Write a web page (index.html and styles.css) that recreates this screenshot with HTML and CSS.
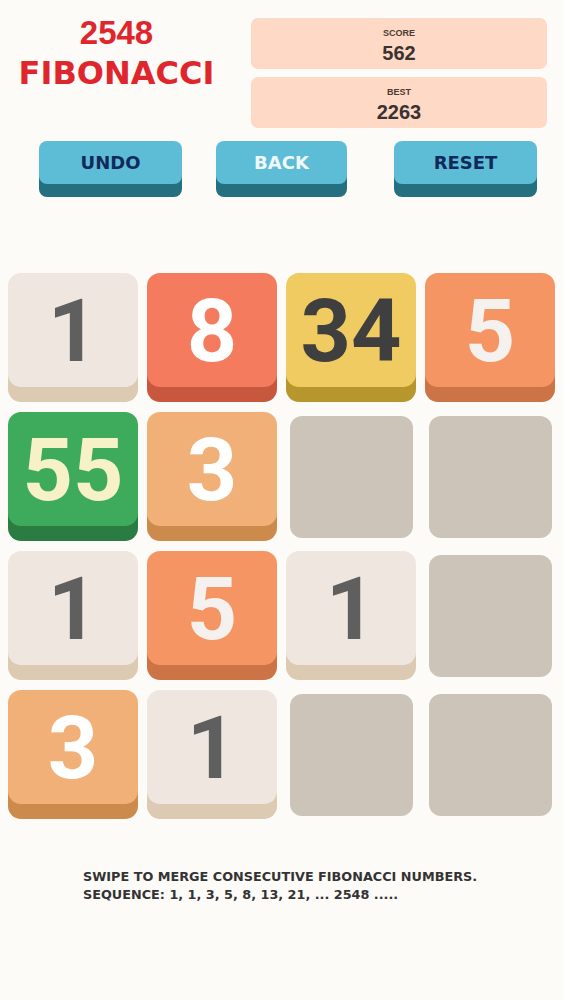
FILE: index.html
```html
<!DOCTYPE html>
<html lang="en">
<head>
<meta charset="utf-8">
<title>2548 Fibonacci</title>
<link rel="stylesheet" href="styles.css">
</head>
<body>
<div class="page">
  <header class="top">
    <h1 class="title"><span class="title-line title-num">2548</span><span class="title-line">FIBONACCI</span></h1>
    <div class="scores">
      <div class="score-box"><div class="score-label">SCORE</div><div class="score-value">562</div></div>
      <div class="score-box"><div class="score-label">BEST</div><div class="score-value">2263</div></div>
    </div>
  </header>
  <nav class="controls">
    <button class="btn btn-undo">UNDO</button>
    <button class="btn btn-back">BACK</button>
    <button class="btn btn-reset">RESET</button>
  </nav>
  <main class="board">
    <div class="cell"><div class="tile t1">1</div></div>
    <div class="cell"><div class="tile t8">8</div></div>
    <div class="cell"><div class="tile t34">34</div></div>
    <div class="cell"><div class="tile t5">5</div></div>

    <div class="cell"><div class="tile t55">55</div></div>
    <div class="cell"><div class="tile t3">3</div></div>
    <div class="cell"><div class="empty"></div></div>
    <div class="cell"><div class="empty"></div></div>

    <div class="cell"><div class="tile t1">1</div></div>
    <div class="cell"><div class="tile t5">5</div></div>
    <div class="cell"><div class="tile t1">1</div></div>
    <div class="cell"><div class="empty"></div></div>

    <div class="cell"><div class="tile t3">3</div></div>
    <div class="cell"><div class="tile t1">1</div></div>
    <div class="cell"><div class="empty"></div></div>
    <div class="cell"><div class="empty"></div></div>
  </main>
  <p class="help">SWIPE TO MERGE CONSECUTIVE FIBONACCI NUMBERS.<br>SEQUENCE: 1, 1, 3, 5, 8, 13, 21, ... 2548 .....</p>
</div>
</body>
</html>
```

FILE: styles.css
```css
html, body {
  margin: 0;
  padding: 0;
  background: #fdfbf8;
}

.page {
  width: 563px;
  min-height: 1000px;
  background: #fdfbf8;
}

.top {
  display: flex;
  padding: 18px 16px 0 8px;
}

.title {
  width: 217px;
  margin: 0;
  margin-top: -6px;
  display: flex;
  flex-direction: column;
  align-items: center;
  font-family: "DejaVu Sans", sans-serif;
  font-weight: bold;
  font-size: 32px;
  line-height: 41px;
  color: #e0262d;
}

.title-line {
  display: block;
}

.title-num {
  font-family: "Liberation Sans", Arial, sans-serif;
  font-size: 33px;
}

.scores {
  flex: 1;
  margin-left: 26px;
  display: flex;
  flex-direction: column;
  gap: 8px;
}

.score-box {
  height: 51px;
  box-sizing: border-box;
  padding-top: 8px;
  background: #fed9c5;
  border-radius: 7px;
  text-align: center;
  font-family: "Liberation Sans", Arial, sans-serif;
  font-weight: bold;
}

.score-label {
  font-size: 9px;
  line-height: 14px;
  color: #4a3a33;
}

.score-value {
  margin-top: 3px;
  font-size: 20px;
  line-height: 20px;
  color: #3a3230;
}

.controls {
  display: flex;
  margin-top: 13px;
  padding-left: 39px;
}

.btn {
  height: 43px;
  margin: 0;
  padding: 0;
  border: none;
  border-radius: 8px;
  background: #5dbdd6;
  box-shadow: 0 13px 0 #246f80;
  font-family: "DejaVu Sans", sans-serif;
  font-weight: bold;
  font-size: 18px;
  color: #112a5b;
  display: flex;
  align-items: center;
  justify-content: center;
}

.btn-undo { width: 143px; }
.btn-back { width: 131px; margin-left: 34px; color: #f1f8fa; }
.btn-reset { width: 143px; margin-left: 47px; }

.board {
  display: grid;
  grid-template-columns: repeat(4, 130px);
  grid-auto-rows: 129px;
  column-gap: 9px;
  row-gap: 10px;
  margin-top: 89px;
  padding: 0 8px;
}

.cell {
  display: flex;
  flex-direction: column;
}

.tile {
  height: 114px;
  border-radius: 13px;
  display: flex;
  align-items: center;
  justify-content: center;
  padding-top: 2px;
  box-sizing: border-box;
  font-family: Roboto, "Liberation Sans", sans-serif;
  font-weight: bold;
  font-size: 88px;
  line-height: 1;
}

.empty {
  margin: 4px 3px 0 4px;
  height: 122px;
  border-radius: 12px;
  background: #ccc4b8;
}

.t1  { background: #efe7df; box-shadow: 0 15px 0 #dccab2; color: #5f5f5f; }
.t8  { background: #f47b5e; box-shadow: 0 15px 0 #c8583d; color: #ffffff; }
.t34 { background: #efcb62; box-shadow: 0 15px 0 #b8962e; color: #3f3f40; }
.t5  { background: #f59563; box-shadow: 0 15px 0 #cd7446; color: #f4f1ee; }
.t55 { background: #3eaa5b; box-shadow: 0 15px 0 #2b7c43; color: #f6f1c6; }
.t3  { background: #f1b077; box-shadow: 0 15px 0 #cc8a4c; color: #ffffff; }

.help {
  margin: 49px 0 0 0;
  padding-left: 83px;
  font-family: "DejaVu Sans", sans-serif;
  font-weight: bold;
  font-size: 12.8px;
  line-height: 18px;
  color: #333333;
}
```
